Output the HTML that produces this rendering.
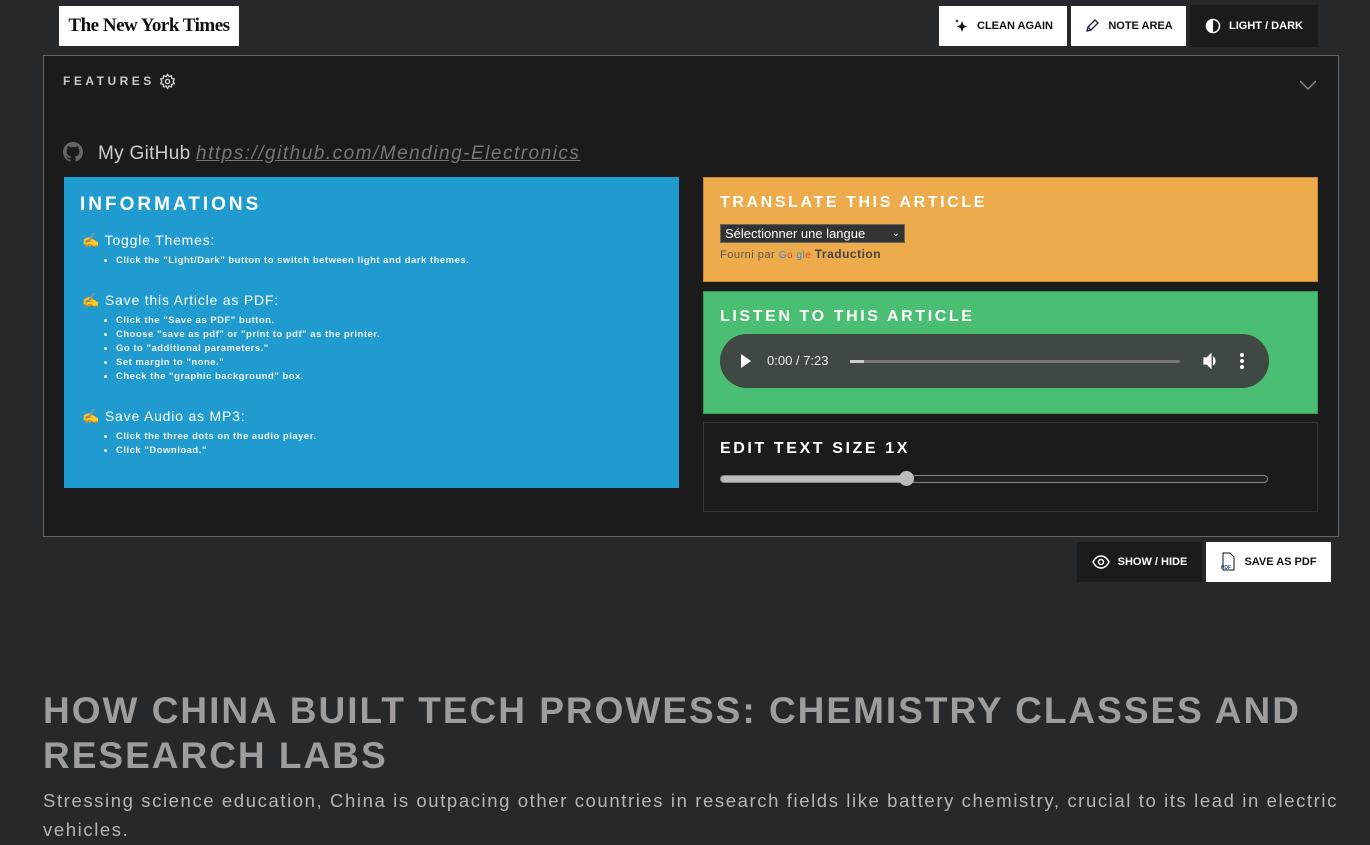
<!DOCTYPE html>
<html><head><meta charset="utf-8"><style>
*{box-sizing:border-box;margin:0;padding:0}
body{width:1370px;height:845px;overflow:hidden;background:#26292c;font-family:"Liberation Sans",sans-serif;color:#fff;position:relative}
.abs{position:absolute}
.btn{position:absolute;top:6px;height:40px;display:flex;align-items:center;justify-content:center;gap:8px;font-size:11px;font-weight:bold;letter-spacing:0}
.white{background:#fff;color:#111}
.dark{background:#1b1b1c;color:#fff}
h3{font-size:16px;letter-spacing:2.6px;font-weight:bold;color:#fff}
li{font-size:9.5px;letter-spacing:.5px;margin-left:36px;line-height:14px;font-weight:bold;color:#f2f2f2}
.hd{font-size:14px;letter-spacing:.8px;margin:0 0 6px 18px;color:#fff}
</style></head><body>
<div class="abs" style="left:59px;top:6px;width:180px;height:40px;background:#fff;display:flex;align-items:center;justify-content:center;font-family:'Liberation Serif',serif;font-weight:bold;font-size:19px;color:#111;letter-spacing:-0.5px">The New York Times</div>
<div class="btn white" style="left:939px;width:128px"><svg width="16" height="16" viewBox="0 0 16 16"><path d="M9 3l1.5 4L14 8.5 10.5 10 9 14 7.5 10 4 8.5 7.5 7z" fill="#111"/><path d="M4 1l.7 1.5L6 3l-1.3.5L4 5 3.3 3.5 2 3l1.3-.5z" fill="#111"/></svg>CLEAN AGAIN</div>
<div class="btn white" style="left:1071px;width:115px"><svg width="16" height="16" viewBox="0 0 16 16"><path d="M3 13l1-4 7-7 3 3-7 7z M4 9l3 3" stroke="#1a1a4a" stroke-width="1.3" fill="none"/></svg>NOTE AREA</div>
<div class="btn dark" style="left:1190px;width:128px;top:5px;height:42px"><svg width="16" height="16" viewBox="0 0 16 16"><circle cx="8" cy="8" r="6.5" stroke="#fff" stroke-width="1.5" fill="none"/><path d="M8 1.5a6.5 6.5 0 0 0 0 13z" fill="#fff"/></svg>LIGHT / DARK</div>

<div class="abs" style="left:43px;top:55px;width:1296px;height:482px;background:#1b1b1c;border:1px solid #666"></div>
<div class="abs" style="left:63px;top:74px;font-size:12px;font-weight:bold;letter-spacing:3.5px;color:#c8c8c8">FEATURES</div>
<svg class="abs" style="left:159px;top:73px" width="17" height="17" viewBox="0 0 24 24" fill="none" stroke="#ccc" stroke-width="2"><circle cx="12" cy="12" r="3"/><path d="M12 2l2 3 3.5-1 .5 3.5 3.5 1-1.5 3.5 1.5 3-3.5 1-.5 3.5-3.5-1-2 3-2-3-3.5 1-.5-3.5-3.5-1 1.5-3-1.5-3.5 3.5-1L6.5 4 10 5z"/></svg>
<svg class="abs" style="left:1299px;top:80px" width="18" height="11" viewBox="0 0 18 11"><path d="M1 1l8 8 8-8" stroke="#888" stroke-width="1.4" fill="none"/></svg>
<svg class="abs" style="left:63px;top:142px" width="20" height="20" viewBox="0 0 16 16"><path fill="#666" d="M8 0C3.58 0 0 3.58 0 8c0 3.54 2.29 6.53 5.47 7.59.4.07.55-.17.55-.38v-1.33c-2.23.48-2.7-1.07-2.7-1.07-.36-.92-.89-1.17-.89-1.17-.73-.5.05-.49.05-.49.8.06 1.23.83 1.23.83.71 1.23 1.87.87 2.33.66.07-.52.28-.87.51-1.07-1.78-.2-3.65-.89-3.65-3.95 0-.87.31-1.59.82-2.15-.08-.2-.36-1.02.08-2.12 0 0 .67-.21 2.2.82a7.6 7.6 0 0 1 4 0c1.53-1.04 2.2-.82 2.2-.82.44 1.1.16 1.92.08 2.12.51.56.82 1.27.82 2.15 0 3.07-1.87 3.75-3.65 3.95.29.25.54.73.54 1.48v2.2c0 .21.15.46.55.38A8 8 0 0 0 16 8c0-4.42-3.58-8-8-8z"/></svg>
<div class="abs" style="left:98px;top:143px;font-size:19px;color:#ccc;letter-spacing:.3px">My GitHub <span style="color:#777;font-style:italic;text-decoration:underline;letter-spacing:1.5px">https://github.com/Mending-Electronics</span></div>

<div class="abs" style="left:64px;top:177px;width:615px;height:311px;background:#1f9bcf;padding:17px 0 0 16px">
<h3 style="font-size:19px;letter-spacing:3px">INFORMATIONS</h3>
<div style="margin-top:16px"><span class="hd" style="margin-left:2px">✍ Toggle Themes:</span><ul style="margin-top:4px"><li>Click the "Light/Dark" button to switch between light and dark themes.</li></ul></div>
<div style="margin-top:24px"><span class="hd" style="margin-left:2px">✍ Save this Article as PDF:</span><ul style="margin-top:4px"><li>Click the "Save as PDF" button.</li><li>Choose "save as pdf" or "print to pdf" as the printer.</li><li>Go to "additional parameters."</li><li>Set margin to "none."</li><li>Check the "graphic background" box.</li></ul></div>
<div style="margin-top:24px"><span class="hd" style="margin-left:2px">✍ Save Audio as MP3:</span><ul style="margin-top:4px"><li>Click the three dots on the audio player.</li><li>Click "Download."</li></ul></div>
</div>

<div class="abs" style="left:703px;top:177px;width:615px;height:105px;background:#eeab4c;border:1px solid #c98a30;padding:16px 0 0 16px">
<h3>TRANSLATE THIS ARTICLE</h3>
<div style="margin-top:12px;width:185px;height:19px;background:#333;border:1px solid #666;color:#fff;font-size:13px;padding-left:4px;line-height:17px;position:relative">Sélectionner une langue<span style="position:absolute;right:4px;top:0;font-size:10px">⌄</span></div>
<div style="margin-top:4px;font-size:11px;color:#555;letter-spacing:.5px">Fourni par <span style="font-size:10px"><span style="color:#4285f4">G</span><span style="color:#ea4335">o</span> <span style="color:#4285f4">g</span><span style="color:#34a853">l</span><span style="color:#ea4335">e</span></span> <span style="color:#444;font-weight:bold;font-size:12px">Traduction</span></div>
</div>

<div class="abs" style="left:703px;top:291px;width:615px;height:123px;background:#4abe72;border:1px solid #3a9a5a;padding:16px 0 0 16px">
<h3>LISTEN TO THIS ARTICLE</h3>
<div style="margin-top:8px;width:549px;height:54px;border-radius:27px;background:#3f4842;position:relative;color:#eee;font-size:13px">
<svg class="abs" style="left:21px;top:20px" width="10" height="14"><path d="M0 0l10 7-10 7z" fill="#fff"/></svg>
<span class="abs" style="left:47px;top:19px">0:00 / 7:23</span>
<div class="abs" style="left:130px;top:26px;width:330px;height:3px;background:#777;border-radius:2px"><div style="width:14px;height:3px;background:#ccc"></div></div>
<svg class="abs" style="left:483px;top:19px" width="16" height="16" viewBox="0 0 16 16"><path d="M1 5h3l4-4v14l-4-4H1z M10 4a5 5 0 0 1 0 8" fill="#fff" stroke="#fff" stroke-width="1.2"/></svg>
<div class="abs" style="left:520px;top:19px;width:4px;line-height:5px;font-size:0"><i style="display:block;width:4px;height:4px;border-radius:2px;background:#fff;margin-bottom:2px"></i><i style="display:block;width:4px;height:4px;border-radius:2px;background:#fff;margin-bottom:2px"></i><i style="display:block;width:4px;height:4px;border-radius:2px;background:#fff"></i></div>
</div></div>

<div class="abs" style="left:703px;top:422px;width:615px;height:90px;background:#1b1b1c;border:1px solid #333;padding:17px 0 0 16px">
<h3>EDIT TEXT SIZE 1X</h3>
<div style="margin-top:17px;width:548px;height:8px;border-radius:4px;border:1px solid #888;background:#222;position:relative"><div style="width:185px;height:6px;background:#bbb;border-radius:3px"></div><div class="abs" style="left:178px;top:-5px;width:15px;height:15px;border-radius:50%;background:#bbb"></div></div>
</div>

<div class="btn dark" style="left:1077px;top:542px;width:125px;height:40px"><svg width="18" height="14" viewBox="0 0 18 14"><path d="M1 7c2-4 5-6 8-6s6 2 8 6c-2 4-5 6-8 6S3 11 1 7z" stroke="#fff" stroke-width="1.5" fill="none"/><circle cx="9" cy="7" r="2.5" stroke="#fff" stroke-width="1.5" fill="none"/></svg>SHOW / HIDE</div>
<div class="btn white" style="left:1206px;top:542px;width:125px;height:40px"><svg width="16" height="20" viewBox="0 0 16 20"><path d="M3 1h7l4 4v13H3z" stroke="#111" fill="none"/><text x="1" y="17" font-size="5" fill="#1a4a8a" font-family="Liberation Sans">PDF</text></svg>SAVE AS PDF</div>

<div class="abs" style="left:43px;top:688px;width:1300px;font-size:37px;font-weight:bold;letter-spacing:2px;line-height:45px;color:#9d9d9d">HOW CHINA BUILT TECH PROWESS: CHEMISTRY CLASSES AND RESEARCH LABS</div>
<div class="abs" style="left:43px;top:786px;width:1300px;font-size:18.5px;letter-spacing:1.6px;line-height:29px;color:#b5b5b5">Stressing science education, China is outpacing other countries in research fields like battery chemistry, crucial to its lead in electric vehicles.</div>
</body></html>
